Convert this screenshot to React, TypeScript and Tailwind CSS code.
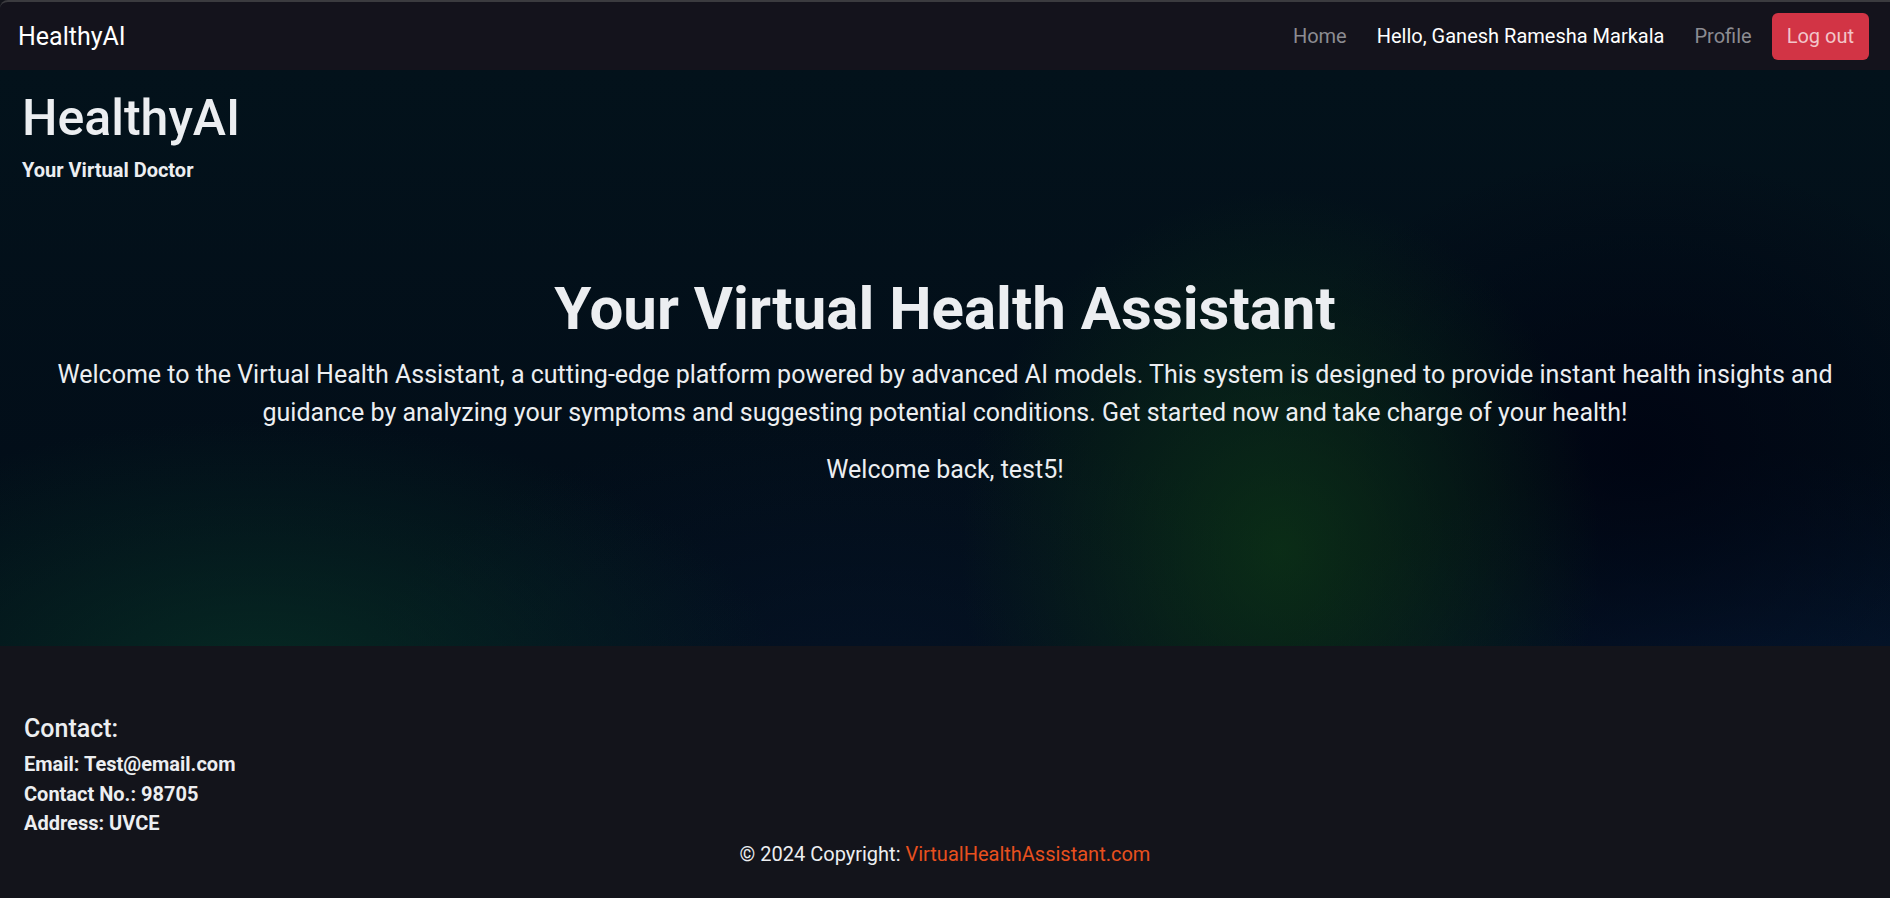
const NAV_LINKS = [
  { label: "Home", active: false },
  { label: "Hello, Ganesh Ramesha Markala", active: true },
  { label: "Profile", active: false },
]

const CONTACT = ["Email: Test@email.com", "Contact No.: 98705", "Address: UVCE"]

function Navbar() {
  return (
    <nav className="flex h-[70px] items-center justify-between rounded-tl-lg border-t-2 border-[#3b3b3f] bg-[#14131c] pl-[18px] pr-[21px]">
      <a className="text-[25px] leading-none text-white">HealthyAI</a>

      <div className="flex items-center">
        <ul className="flex items-center gap-[30px] text-[20px]">
          {NAV_LINKS.map((link) => (
            <li
              key={link.label}
              className={link.active ? "text-white" : "text-[#8c8c92]"}
            >
              {link.label}
            </li>
          ))}
        </ul>

        <button className="ml-[20px] h-[47px] rounded-md bg-[#d23445] px-[15px] text-[20px] text-[#f2c5ca]">
          Log out
        </button>
      </div>
    </nav>
  )
}

function Hero() {
  return (
    <section className="h-[576px] bg-[radial-gradient(ellipse_320px_360px_at_1280px_480px,rgba(14,58,22,0.7),transparent),radial-gradient(ellipse_520px_260px_at_260px_610px,rgba(8,54,40,0.7),transparent),radial-gradient(ellipse_380px_300px_at_1640px_380px,rgba(0,4,18,0.9),transparent),radial-gradient(ellipse_480px_260px_at_1750px_640px,rgba(6,28,58,0.8),transparent),radial-gradient(ellipse_500px_280px_at_860px_620px,rgba(6,22,44,0.6),transparent),linear-gradient(180deg,#03121b,#020c18)] px-[22px] pt-[18px] text-[#eceef1]">
      {/* Brand block */}
      <h1 className="mb-[7px] text-[50px] font-medium leading-[1.2]">HealthyAI</h1>
      <p className="text-[20px] font-bold leading-[30px]">Your Virtual Doctor</p>

      {/* Intro */}
      <div className="mt-[88px] text-center">
        <h2 className="text-[60px] font-bold leading-[1.2]">
          Your Virtual Health Assistant
        </h2>
        <p className="mx-auto mt-[11px] max-w-[1800px] text-[25px] leading-[37.5px]">
          Welcome to the Virtual Health Assistant, a cutting-edge platform powered by advanced AI models. This system is designed to provide instant health insights and guidance by analyzing your symptoms and suggesting potential conditions. Get started now and take charge of your health!
        </p>
        <p className="mt-[20px] text-[25px] leading-[37.5px]">Welcome back, test5!</p>
      </div>
    </section>
  )
}

function Footer() {
  return (
    <footer className="h-[252px] bg-[#13141b] px-[24px] pt-[68px] text-[#eceef1]">
      {/* Contact */}
      <h5 className="mb-[6px] text-[25px] font-medium leading-[1.2]">Contact:</h5>
      {CONTACT.map((line) => (
        <p key={line} className="text-[20px] font-bold leading-[29.5px]">
          {line}
        </p>
      ))}

      {/* Copyright */}
      <p className="text-center text-[20px] leading-[30px]">
        © 2024 Copyright: <a className="text-[#e8501e]">VirtualHealthAssistant.com</a>
      </p>
    </footer>
  )
}

export default function App() {
  return (
    <div className="min-h-[898px] bg-[#13141b] font-['Roboto',sans-serif]">
      <Navbar />
      <Hero />
      <Footer />
    </div>
  )
}
